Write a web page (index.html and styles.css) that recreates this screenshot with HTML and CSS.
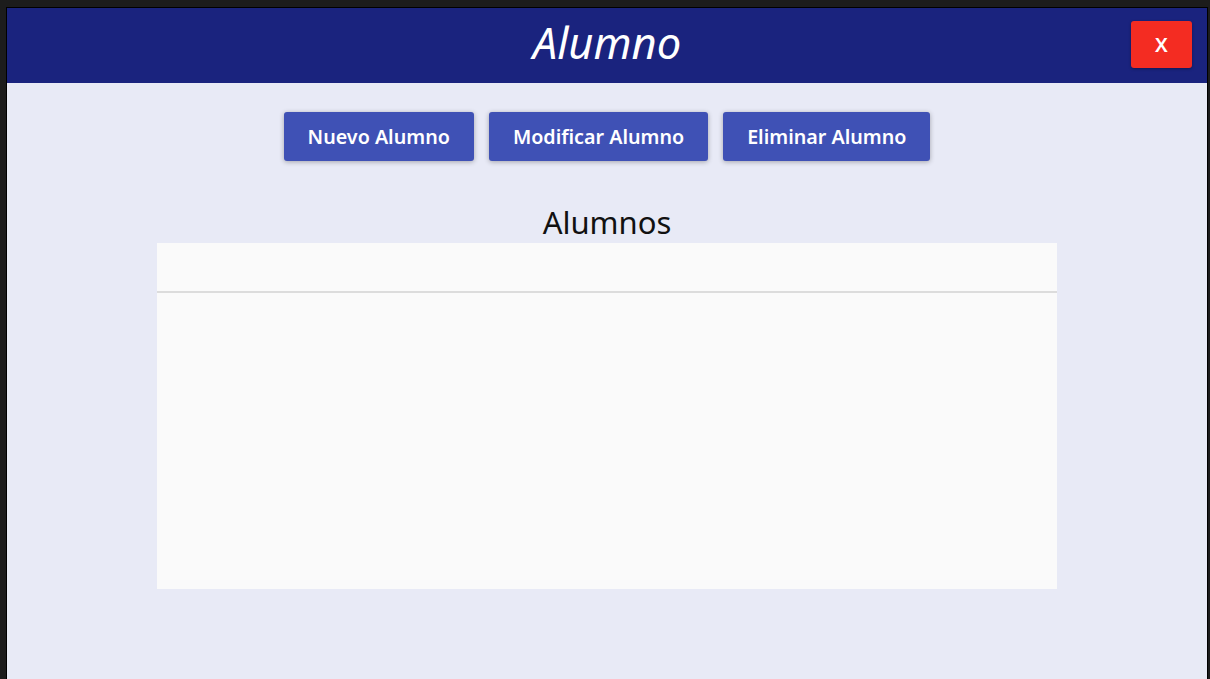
FILE: index.html
```html
<!DOCTYPE html>
<html lang="es">
<head>
<meta charset="utf-8">
<title>Alumno</title>
<link rel="stylesheet" href="styles.css">
</head>
<body>
<div class="window">
  <header class="titlebar">
    <div class="spacer"></div>
    <h1 class="title">Alumno</h1>
    <button class="close-btn">X</button>
  </header>
  <main class="content">
    <div class="actions">
      <button class="btn">Nuevo Alumno</button>
      <button class="btn">Modificar Alumno</button>
      <button class="btn">Eliminar Alumno</button>
    </div>
    <h2 class="section-title">Alumnos</h2>
    <div class="table">
      <div class="table-head"></div>
      <div class="table-body"></div>
    </div>
  </main>
</div>
</body>
</html>
```

FILE: styles.css
```css
html, body {
  margin: 0;
  padding: 0;
  height: 100%;
}
body {
  background: #1c1c1c;
  padding: 7px 2px 0 6px;
  box-sizing: border-box;
  font-family: "Noto Sans", "Open Sans", sans-serif;
  overflow: hidden;
}
.window {
  border: 1px solid #000;
  border-bottom: none;
  height: calc(100vh - 7px);
  box-sizing: border-box;
  background: #e8eaf6;
  display: flex;
  flex-direction: column;
}
.titlebar {
  height: 75px;
  background: #1a237e;
  display: grid;
  grid-template-columns: 1fr auto 1fr;
  align-items: center;
  flex: none;
}
.title {
  margin: 0;
  color: #fff;
  font-size: 43.5px;
  font-weight: 400;
  font-style: italic;
  line-height: 1;
  padding-bottom: 6px;
}
.close-btn {
  justify-self: end;
  margin-right: 15px;
  margin-top: -2px;
  width: 61px;
  height: 47px;
  border: none;
  border-radius: 3px;
  background: #f42c22;
  color: #fff;
  font-family: "Noto Sans", sans-serif;
  font-size: 20px;
  font-weight: 600;
  box-shadow: 0 1px 3px rgba(0,0,0,0.35);
  padding: 0;
}
.content {
  display: flex;
  flex-direction: column;
  align-items: center;
}
.actions {
  display: flex;
  gap: 15px;
  margin-top: 29px;
}
.btn {
  height: 49px;
  padding: 0 24px;
  border: none;
  border-radius: 3px;
  background: #3f51b5;
  color: #fff;
  font-family: "Noto Sans", sans-serif;
  font-size: 19.7px;
  font-weight: 600;
  box-shadow: 0 1px 5px rgba(0,0,0,0.3);
}
.section-title {
  margin: 40px 0 0;
  font-size: 31px;
  font-weight: 400;
  color: #111;
  line-height: 42px;
}
.table {
  width: 900px;
  height: 346px;
  background: #fafafa;
  display: flex;
  flex-direction: column;
}
.table-head {
  height: 48px;
  border-bottom: 2px solid #dcdcdc;
  flex: none;
}
.table-body {
  flex: 1;
}
```
